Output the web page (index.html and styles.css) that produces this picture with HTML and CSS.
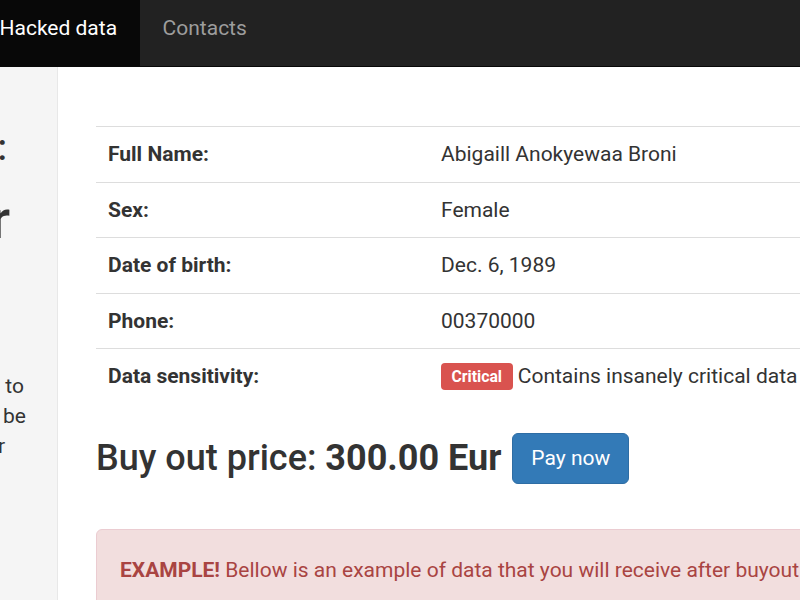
FILE: index.html
```html
<!DOCTYPE html>
<html>
<head>
<meta charset="utf-8">
<link rel="stylesheet" href="styles.css">
</head>
<body>
<nav class="navbar">
  <ul class="nav">
    <li class="nav-item active">Hacked data</li>
    <li class="nav-item contacts">Contacts</li>
  </ul>
</nav>
<div class="layout">
  <aside class="sidebar">
    <div class="sline side-h3 pr-colon"><span>Your data:</span></div>
    <div class="sline side-h1 pr-r1"><span>Hacker</span></div>
    <div class="sline side-p pr-to first-p"><span>If you want to</span></div>
    <div class="sline side-p pr-be"><span>your data can be</span></div>
    <div class="sline side-p pr-r2"><span>deleted after</span></div>
  </aside>
  <main class="main">
    <table class="info">
      <tr><th>Full Name:</th><td>Abigaill Anokyewaa Broni</td></tr>
      <tr><th>Sex:</th><td>Female</td></tr>
      <tr><th>Date of birth:</th><td>Dec. 6, 1989</td></tr>
      <tr><th>Phone:</th><td>00370000</td></tr>
      <tr><th>Data sensitivity:</th><td><span class="label">Critical</span> Contains insanely critical data</td></tr>
    </table>
    <div class="price-row">
      <h3 class="price">Buy out price: <strong>300.00 Eur</strong></h3>
      <button class="btn">Pay now</button>
    </div>
    <div class="alert"><strong>EXAMPLE!</strong> Bellow is an example of data that you will receive after buyout</div>
  </main>
</div>
</body>
</html>
```
FILE: styles.css
```css
html, body {
  margin: 0;
  padding: 0;
  overflow: hidden;
  width: 800px;
  height: 600px;
}
body {
  font-family: Roboto, "Liberation Sans", sans-serif;
  font-size: 21px;
  line-height: 30px;
  color: #333;
  background: #fff;
}
.navbar {
  height: 66px;
  background: #222;
  border-bottom: 1px solid #080808;
  overflow: hidden;
}
.nav {
  list-style: none;
  margin: 0 0 0 -24px;
  padding: 0;
  display: flex;
}
.nav-item {
  padding: 13px 22.5px 23px;
  line-height: 30px;
  color: #9d9d9d;
  white-space: nowrap;
}
.nav-item.active {
  background: #080808;
  color: #fff;
  padding-left: 23.5px;
}
.nav-item.contacts {
  padding-left: 23px;
}
.layout {
  display: flex;
  height: 533px;
}
.sidebar {
  flex: 0 0 57px;
  width: 57px;
  background: #f5f5f5;
  border-right: 1px solid #e8e8e8;
  overflow: hidden;
}
.sline {
  display: flex;
  justify-content: flex-end;
  white-space: nowrap;
}
.side-h3 {
  font-size: 36px;
  line-height: 40px;
  font-weight: 500;
  margin-top: 61px;
}
.side-h1 {
  font-size: 54px;
  line-height: 60px;
  font-weight: 500;
  margin-top: 22px;
}
.side-p {
  font-size: 21px;
  line-height: 30px;
}
.first-p { margin-top: 121px; }
.pr-colon { padding-right: 50px; }
.pr-r1 { padding-right: 47px; }
.pr-to { padding-right: 33px; }
.pr-be { padding-right: 31px; }
.pr-r2 { padding-right: 52px; }
.main {
  flex: 1;
  padding: 59px 0 0 38px;
  min-width: 0;
}
.info {
  border-collapse: collapse;
  width: 900px;
}
.info th, .info td {
  text-align: left;
  padding: 12px 12px;
  line-height: 30.5px;
  border-top: 1px solid #ddd;
  white-space: nowrap;
  vertical-align: top;
}
.info th {
  width: 309px;
  font-weight: 700;
}
.label {
  display: inline-block;
  background: #d9534f;
  color: #fff;
  font-size: 15.75px;
  font-weight: 700;
  line-height: 27px;
  padding: 0 10.5px;
  border-radius: 4px;
  vertical-align: 1.5px;
}
.price-row {
  display: flex;
  align-items: center;
  margin-top: 29.5px;
}
.price {
  margin: 0;
  font-size: 36px;
  line-height: 39.6px;
  font-weight: 500;
  white-space: nowrap;
}
.price strong { font-weight: 700; }
.btn {
  margin: 0 0 0 11px;
  font-family: inherit;
  font-size: 21px;
  line-height: 30px;
  padding: 9px 18px 10px;
  color: #fff;
  background: #337ab7;
  border: 1px solid #2e6da4;
  border-radius: 6px;
  white-space: nowrap;
}
.alert {
  margin-top: 45px;
  width: 900px;
  background: #f2dede;
  border: 1px solid #ebccd1;
  border-radius: 6px;
  color: #a94442;
  padding: 25px 23px 22px;
  white-space: nowrap;
}
.alert strong { font-weight: 700; }
```
